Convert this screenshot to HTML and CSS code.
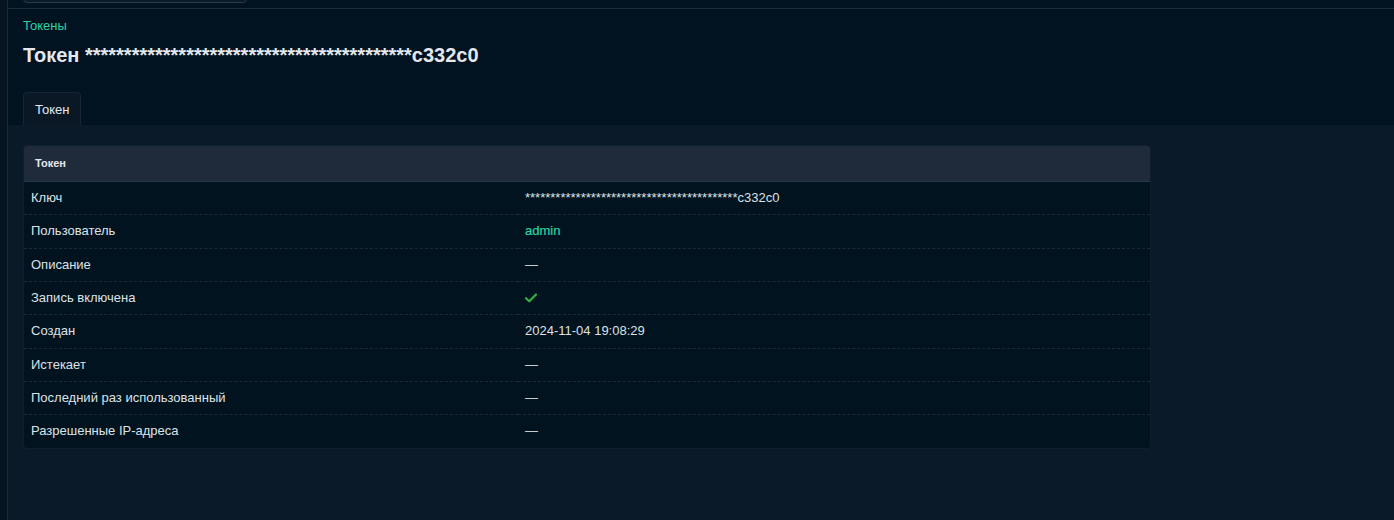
FILE: index.html
```html
<!DOCTYPE html>
<html lang="ru">
<head>
<meta charset="utf-8">
<title>Токен</title>
<link rel="stylesheet" href="styles.css">
</head>
<body>
<div class="layout">
  <div class="side-edge"></div>
  <div class="main">
    <div class="topbar">
      <div class="search"></div>
    </div>
    <header class="page-header">
      <div class="breadcrumb"><a href="#">Токены</a></div>
      <h1 class="title">Токен ******************************************c332c0</h1>
      <nav class="tabs">
        <span class="tab active">Токен</span>
      </nav>
    </header>
    <section class="content">
      <div class="card">
        <div class="card-header">Токен</div>
        <table class="attrs">
          <tr><th>Ключ</th><td>******************************************c332c0</td></tr>
          <tr><th>Пользователь</th><td><a href="#" class="link">admin</a></td></tr>
          <tr><th>Описание</th><td><span class="muted">—</span></td></tr>
          <tr><th>Запись включена</th><td><svg class="check" width="12" height="10" viewBox="0 0 12 10"><path d="M1 5.2 L4.3 8.3 L11 1.5" fill="none" stroke="#2fb344" stroke-width="2.2" stroke-linecap="round" stroke-linejoin="round"/></svg></td></tr>
          <tr><th>Создан</th><td>2024-11-04 19:08:29</td></tr>
          <tr><th>Истекает</th><td><span class="muted">—</span></td></tr>
          <tr><th>Последний раз использованный</th><td><span class="muted">—</span></td></tr>
          <tr><th>Разрешенные IP-адреса</th><td><span class="muted">—</span></td></tr>
        </table>
      </div>
    </section>
  </div>
</div>
</body>
</html>
```
FILE: styles.css
```css
html, body {
  margin: 0;
  padding: 0;
  height: 100%;
  background: #0a1a28;
  font-family: "Liberation Sans", Arial, sans-serif;
  color: #dfe4ea;
}

.layout {
  display: flex;
  min-height: 520px;
}

.side-edge {
  width: 7px;
  flex: none;
  background: #061421;
  border-right: 1px solid #1a2a38;
}

.main {
  flex: 1;
  display: flex;
  flex-direction: column;
  background: #0a1a28;
}

.topbar {
  height: 8px;
  display: flex;
  align-items: flex-end;
  padding: 0 15px 0 15px;
  background: #011220;
  border-bottom: 1px solid #1b2b39;
  overflow: hidden;
}

.search {
  width: 222px;
  height: 36px;
  margin-bottom: 5px;
  flex: none;
  background: #0b1a28;
  border: 1px solid #2a3947;
  border-radius: 4px;
}

.page-header {
  background: #011220;
  padding: 7px 15px 0 15px;
}

.breadcrumb {
  font-size: 13px;
  line-height: 20px;
}

.breadcrumb a {
  color: #2ed3a2;
  text-decoration: none;
}

.title {
  margin: 7px 0 0 0;
  font-size: 20px;
  line-height: 24px;
  font-weight: bold;
  color: #e3e8ee;
}

.tabs {
  display: flex;
  margin-top: 25px;
}

.tab {
  display: block;
  padding: 0 11px;
  height: 33px;
  line-height: 33px;
  font-size: 13px;
  color: #e3e8ee;
  background: #0a1826;
  border: 1px solid #172634;
  border-bottom: none;
  border-radius: 4px 4px 0 0;
  box-sizing: border-box;
}

.content {
  padding: 20px 15px;
}

.card {
  width: 1126px;
  background: #01131f;
  border: 1px solid #0f1f2c;
  border-radius: 4px;
  overflow: hidden;
}

.card-header {
  background: #1f2b3b;
  height: 35px;
  line-height: 35px;
  padding: 0 11px;
  font-size: 11px;
  font-weight: bold;
  color: #e3e8ee;
  border-bottom: 1px solid #2a3848;
}

.attrs {
  width: 100%;
  border-collapse: collapse;
  font-size: 13px;
}

.attrs th,
.attrs td {
  text-align: left;
  font-weight: normal;
  padding: 7px 7px;
  line-height: 18.33px;
  vertical-align: middle;
  color: #dde2e8;
}

.attrs th {
  width: 480px;
}

.attrs tr + tr th,
.attrs tr + tr td {
  border-top: 1px dashed #1b2a37;
}

.link {
  color: #2ed3a2;
  text-decoration: none;
  font-weight: 500;
  -webkit-text-stroke: 0.2px #2ed3a2;
}

.muted {
  color: #c6ccd3;
}

.check {
  display: block;
}
```
